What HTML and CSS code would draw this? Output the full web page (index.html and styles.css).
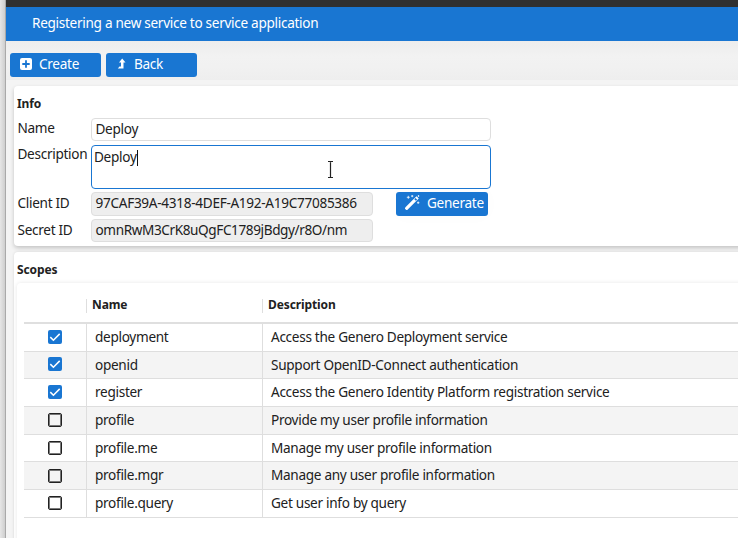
FILE: index.html
```html
<!DOCTYPE html>
<html lang="en">
<head>
<meta charset="utf-8">
<title>Registering a new service</title>
<link rel="stylesheet" href="styles.css">
</head>
<body>
<div class="window">
  <div class="edge"></div>
  <main class="app">
    <div class="chrome"></div>
    <header class="titlebar"><span>Registering a new service to service application</span></header>
    <nav class="toolbar">
      <button class="btn create"><svg width="12" height="12" viewBox="0 0 12 12"><rect width="12" height="12" rx="2" fill="#fff"/><path d="M6 2.3v7.4M2.3 6h7.4" stroke="#1976d2" stroke-width="1.8"/></svg><span>Create</span></button>
      <button class="btn back"><svg width="9" height="12" viewBox="0 0 9 12"><path d="M5.2.6 8.5 4.6H6.5V10.4H.8L2.5 8.4H4V4.6H2z" fill="#fff"/></svg><span>Back</span></button>
    </nav>
    <div class="content">
      <section class="card info">
        <h2>Info</h2>
        <div class="row name"><label>Name</label><div class="field wide">Deploy</div></div>
        <div class="row description"><label>Description</label><div class="field area">Deploy<i class="caret"></i>
          <svg class="pointer" width="9" height="19" viewBox="0 0 9 19"><path d="M2 1.5h2l.5.5.5-.5h2M4.5 2v15M2 17.5h2l.5-.5.5.5h2" fill="none" stroke="#fff" stroke-width="3"/><path d="M2 1.5h2l.5.5.5-.5h2M4.5 2v15M2 17.5h2l.5-.5.5.5h2" fill="none" stroke="#222" stroke-width="1.2"/></svg></div></div>
        <div class="row client"><label>Client ID</label><div class="field locked">97CAF39A-4318-4DEF-A192-A19C77085386</div>
          <button class="btn generate"><svg width="15" height="15" viewBox="0 0 15 15"><path d="M1.8 13.2 11.5 3.5" stroke="#fff" stroke-width="3.2" stroke-linecap="square"/><path d="m9.3 4.2 1.6 1.6 1.2-1.2-1.6-1.6z" fill="#1976d2"/><path d="M3.3.8v3M1.8 2.3h3M7.2 0v2.2M6.1 1.1h2.2M13.2 6.5v2.4M12 7.7h2.4M13.5.2v1.6M12.7 1h1.6" stroke="#fff" stroke-width=".8"/></svg><span>Generate</span></button></div>
        <div class="row secret"><label>Secret ID</label><div class="field locked">omnRwM3CrK8uQgFC1789jBdgy/r8O/nm</div></div>
      </section>
      <section class="card scopes">
        <h2>Scopes</h2>
        <div class="panel">
          <div class="thead"><span></span><b>Name</b><b>Description</b></div>
          <div class="tbody">
            <div class="tr"><span class="check"><i class="box on"><svg viewBox="0 0 14 14"><path d="m2.3 7.1 3.1 3.1 6.3-6.3"/></svg></i></span><span>deployment</span><span>Access the Genero Deployment service</span></div>
            <div class="tr"><span class="check"><i class="box on"><svg viewBox="0 0 14 14"><path d="m2.3 7.1 3.1 3.1 6.3-6.3"/></svg></i></span><span>openid</span><span>Support OpenID-Connect authentication</span></div>
            <div class="tr"><span class="check"><i class="box on"><svg viewBox="0 0 14 14"><path d="m2.3 7.1 3.1 3.1 6.3-6.3"/></svg></i></span><span>register</span><span>Access the Genero Identity Platform registration service</span></div>
            <div class="tr"><span class="check"><i class="box"></i></span><span>profile</span><span>Provide my user profile information</span></div>
            <div class="tr"><span class="check"><i class="box"></i></span><span>profile.me</span><span>Manage my user profile information</span></div>
            <div class="tr"><span class="check"><i class="box"></i></span><span>profile.mgr</span><span>Manage any user profile information</span></div>
            <div class="tr"><span class="check"><i class="box"></i></span><span>profile.query</span><span>Get user info by query</span></div>
          </div>
        </div>
      </section>
    </div>
  </main>
</div>
</body>
</html>
```
FILE: styles.css
```css
* { box-sizing: border-box; }
body { margin: 0; font: 13.6px/18px "Noto Sans", sans-serif; letter-spacing: -.3px; color: #212121; background: #f5f5f5; overflow: hidden; }
.window { display: flex; width: 738px; height: 538px; overflow: hidden; }
.edge { flex: 0 0 6px; background: linear-gradient(90deg, #e6e6e6, #cfcfcf 80%, #a9a9a9 90%); }
.app { flex: 1; min-width: 0; display: flex; flex-direction: column; }
.chrome { flex: 0 0 7px; background: #303030; }
.titlebar { flex: 0 0 34px; padding: 7px 26px 0; background: #1976d2; color: #fff; white-space: nowrap; }
.toolbar { flex: 0 0 39px; display: flex; align-items: flex-start; gap: 5px; padding: 12px 4px 0; background: linear-gradient(#ededed, #f2f2f2 40%, #f1f1f1 65%, #eee); }
.btn { display: flex; align-items: center; height: 24px; padding: 0 0 2px; border: 0; border-radius: 3px; background: #1976d2; color: #fff; font: inherit; letter-spacing: inherit; white-space: nowrap; }
.create, .back { width: 91px; }
.create { padding-left: 10px; gap: 7px; }
.back { padding-left: 11px; gap: 8px; }
.content { flex: 1; min-height: 0; padding: 6px 0 0 8px; background: #f4f4f4; }
.card { margin-right: -8px; background: #fff; border-radius: 4px 0 0 4px; box-shadow: 0 2px 4px rgba(0,0,0,.2); }
h2 { margin: 0; font-size: 12px; line-height: 16px; font-weight: 700; letter-spacing: -.1px; }
.info { height: 160px; padding: 10px 0 0 3px; }
.row { display: flex; }
.row label { width: 74px; padding-left: .5px; white-space: nowrap; }
.field { border: 1px solid #dedede; border-radius: 4px; padding-left: 3.5px; background: #fff; white-space: nowrap; }
.name { margin-top: 6px; height: 27px; }
.name label { padding-top: 1px; }
.wide { width: 400px; height: 23px; padding-top: 0; line-height: 19px; }
.description { height: 47px; }
.area { position: relative; width: 400px; height: 44px; padding: 2px 0 0 2px; border-color: #1976d2; }
.caret { display: inline-block; width: 1px; height: 16px; background: #111; vertical-align: -4px; }
.pointer { position: absolute; left: 234px; top: 14px; }
.client { height: 27px; }
.client label, .secret label { padding-top: 2px; }
.locked { width: 282px; height: 24px; padding-top: 1px; background: #eee; }
.secret .locked { height: 23px; letter-spacing: -.4px; }
.generate { width: 92px; margin-left: 23px; padding-left: 9px; gap: 7px; box-shadow: 0 0 18px rgba(0,0,0,.02); }
.generate svg { margin-bottom: 2px; }
.scopes { height: 300px; margin-top: 6px; padding: 10px 0 0 3px; box-shadow: 0 0 3px rgba(0,0,0,.12); }
.panel { height: 280px; margin-top: 5px; padding-left: 7px; border-radius: 4px 0 0; box-shadow: 0 0 4px rgba(0,0,0,.1); }
.thead { display: grid; grid-template-columns: 62px 176px 1fr; height: 41px; padding-top: 16px; border-bottom: 2px solid #dfdfdf; font-size: 12px; letter-spacing: -.1px; }
.thead b { height: 14px; padding-left: 5px; line-height: 12px; border-left: 1px solid #dedede; }
.tr { display: grid; grid-template-columns: 62px 176px 1fr; height: 27.67px; border-bottom: 1px solid #dedede; line-height: 26px; white-space: nowrap; }
.tr:nth-child(even) { background: #f4f4f4; }
.tr:nth-child(2) { line-height: 25px; }
.tr > span + span { padding-left: 8px; border-left: 1px solid #dedede; }
.check { display: flex; align-items: center; justify-content: center; }
.tr:nth-child(2) .check, .tr:nth-child(3) .check { padding-bottom: 1px; }
.box { display: block; width: 14px; height: 14px; border: 1px solid #212121; border-radius: 2px; box-shadow: inset 0 0 0 1px rgba(33,33,33,.6); }
.on { border: 0; box-shadow: none; background: #1976d2; }
.on svg { display: block; width: 14px; height: 14px; fill: none; stroke: #fff; stroke-width: 1.5; }
```
